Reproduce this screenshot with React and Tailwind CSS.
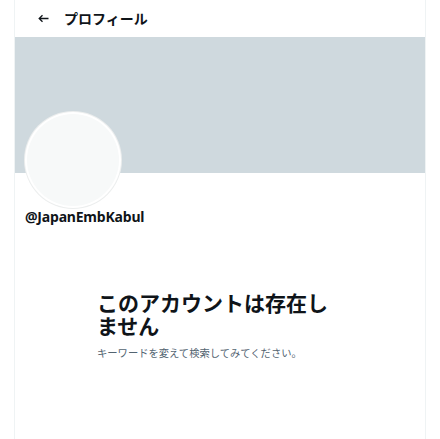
import React from 'react';

const BackArrow = () => (
  <svg width="11" height="9" viewBox="0 0 11 9" fill="none" stroke="#0f1419" strokeWidth="1.3">
    <path d="M10.5 4.5H1.5M4.5 1.2L1.2 4.5L4.5 7.8" />
  </svg>
);

const App = () => {
  return (
    <div
      className="w-[440px] h-[439px] bg-white overflow-hidden"
      style={{ fontFamily: '"Noto Sans", "Noto Sans CJK JP", sans-serif' }}
    >
      <div className="ml-[14px] w-[412px] h-full border-x border-[#eff3f4] flex flex-col">
        {/* Header */}
        <div className="h-[37px] flex items-center">
          <div className="w-[36px] flex justify-end pr-[2px]">
            <BackArrow />
          </div>
          <div className="ml-[13px] text-[14px] font-bold text-[#0f1419] leading-none">プロフィール</div>
        </div>

        {/* Banner */}
        <div className="h-[136px] bg-[#cfd9de]" />

        {/* Avatar + handle */}
        <div className="relative px-[10px]">
          <div className="-mt-[61px] w-[96px] h-[96px] rounded-full bg-white p-[2px] ring-1 ring-[#eceeee]">
            <div className="w-full h-full rounded-full bg-[#f7f9f9]" />
          </div>
          <div className="-mt-[2px] text-[14px] font-bold text-[#0f1419] tracking-[-0.2px]">@JapanEmbKabul</div>
        </div>

        {/* Empty state */}
        <div className="mt-[65px] ml-[82px] w-[246px]">
          <div className="text-[21px] leading-[23px] font-bold text-[#0f1419]">このアカウントは存在しません</div>
          <div className="mt-[8px] text-[10.3px] leading-[14px] text-[#536471]">キーワードを変えて検索してみてください。</div>
        </div>
      </div>
    </div>
  );
};

export default App;
